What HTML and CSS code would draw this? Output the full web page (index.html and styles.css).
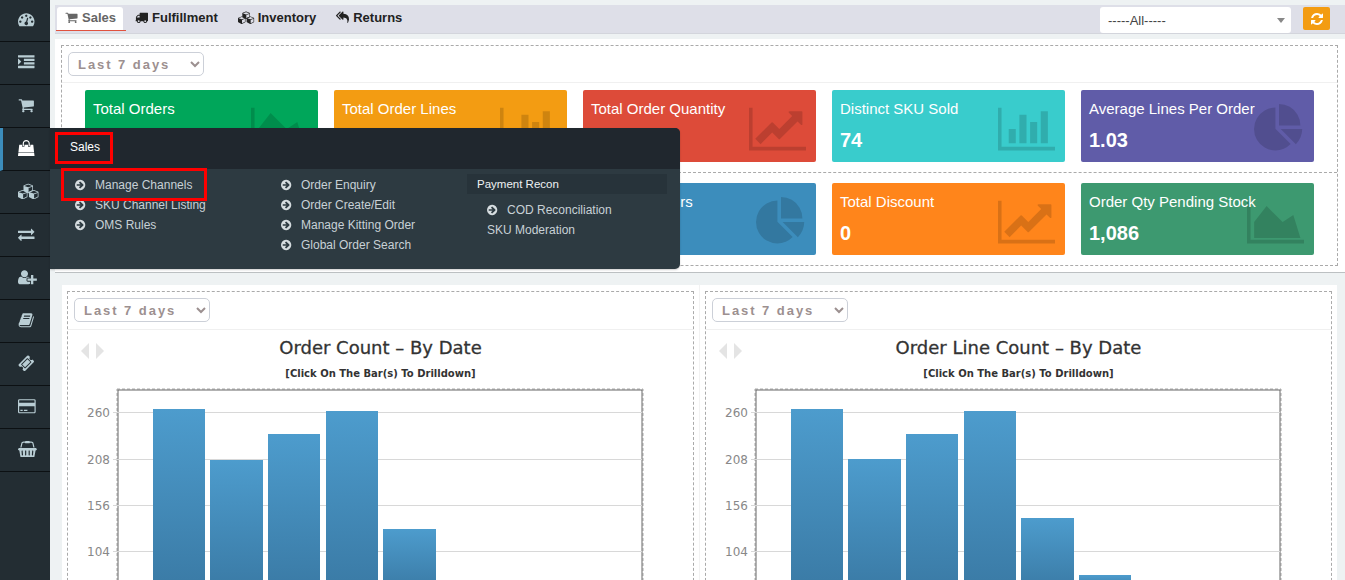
FILE: index.html
```html
<!DOCTYPE html>
<html lang="en">
<head>
<meta charset="utf-8">
<title>Sales Dashboard</title>
<link rel="stylesheet" href="styles.css">
</head>
<body>
<svg class="defs" aria-hidden="true">
  <defs>
    <linearGradient id="bar" x1="0" y1="0" x2="0" y2="1"><stop offset="0" stop-color="#4d9ccd"/><stop offset="1" stop-color="#3a7aa5"/></linearGradient>
    <path id="p-cube" d="M896 1629l640-349v-636l-640 233v752zm-64-865l698-254-698-254-698 254zm832-252v768q0 35-18 65t-49 47l-704 384q-28 16-61 16t-61-16l-704-384q-31-17-49-47t-18-65v-768q0-40 23-73t61-47l704-256q22-8 44-8t44 8l704 256q38 14 61 47t23 73z"/>
  </defs>
  <symbol id="i-dash" viewBox="0 0 1792 1792" preserveAspectRatio="xMinYMid meet"><path d="M384 1152q0-53-37.5-90.5t-90.5-37.5-90.5 37.5-37.5 90.5 37.5 90.5 90.5 37.5 90.5-37.5 37.5-90.5zm192-448q0-53-37.5-90.5t-90.5-37.5-90.5 37.5-37.5 90.5 37.5 90.5 90.5 37.5 90.5-37.5 37.5-90.5zm428 481l101-382q6-26-7.5-48.5t-38.5-29.5-48 6.5-30 39.5l-101 382q-60 5-107 43.5t-63 98.5q-20 77 20 146t117 89 146-20 89-117q16-60-6-117t-72-91zm660-33q0-53-37.5-90.5t-90.5-37.5-90.5 37.5-37.5 90.5 37.5 90.5 90.5 37.5 90.5-37.5 37.5-90.5zm-640-640q0-53-37.5-90.5t-90.5-37.5-90.5 37.5-37.5 90.5 37.5 90.5 90.5 37.5 90.5-37.5 37.5-90.5zm448 192q0-53-37.5-90.5t-90.5-37.5-90.5 37.5-37.5 90.5 37.5 90.5 90.5 37.5 90.5-37.5 37.5-90.5zm320 448q0 261-141 483-19 29-54 29h-1402q-35 0-54-29-141-221-141-483 0-182 71-348t191-286 286-191 348-71 348 71 286 191 191 286 71 348z"/></symbol>
  <symbol id="i-indent" viewBox="0 0 1792 1792" preserveAspectRatio="xMinYMid meet"><path d="M352 832q0 14-9 23l-288 288q-9 9-23 9-13 0-22.5-9.5t-9.5-22.5v-576q0-13 9.5-22.5t22.5-9.5q14 0 23 9l288 288q9 9 9 23zm1440 480v192q0 13-9.5 22.5t-22.5 9.5h-1728q-13 0-22.5-9.5t-9.5-22.5v-192q0-13 9.5-22.5t22.5-9.5h1728q13 0 22.5 9.5t9.5 22.5zm0-384v192q0 13-9.5 22.5t-22.5 9.5h-1088q-13 0-22.5-9.5t-9.5-22.5v-192q0-13 9.5-22.5t22.5-9.5h1088q13 0 22.5 9.5t9.5 22.5zm0-384v192q0 13-9.5 22.5t-22.5 9.5h-1088q-13 0-22.5-9.5t-9.5-22.5v-192q0-13 9.5-22.5t22.5-9.5h1088q13 0 22.5 9.5t9.5 22.5zm0-384v192q0 13-9.5 22.5t-22.5 9.5h-1728q-13 0-22.5-9.5t-9.5-22.5v-192q0-13 9.5-22.5t22.5-9.5h1728q13 0 22.5 9.5t9.5 22.5z"/></symbol>
  <symbol id="i-cart" viewBox="0 0 1792 1792" preserveAspectRatio="xMinYMid meet"><path d="M704 1536q0 52-38 90t-90 38-90-38-38-90 38-90 90-38 90 38 38 90zm896 0q0 52-38 90t-90 38-90-38-38-90 38-90 90-38 90 38 38 90zm128-1088v512q0 24-16.5 42.5t-40.5 21.5l-1044 122q13 60 13 70 0 16-24 64h920q26 0 45 19t19 45-19 45-45 19h-1024q-26 0-45-19t-19-45q0-11 8-31.5t16-36 21.5-40 15.5-29.5l-177-823h-204q-26 0-45-19t-19-45 19-45 45-19h256q16 0 28.5 6.5t19.5 15.5 13 24.5 8 26 5.5 29.5 4.5 26h1201q26 0 45 19t19 45z"/></symbol>
  <symbol id="i-bag" viewBox="0 0 1792 1792" preserveAspectRatio="xMinYMid meet"><path d="M1757 1408l35 313q3 28-16 50-19 21-48 21h-1664q-29 0-48-21-19-22-16-50l35-313h1722zm-93-839l86 775h-1708l86-775q3-24 21-40.5t43-16.5h256v128q0 53 37.5 90.5t90.5 37.5 90.5-37.5 37.5-90.5v-128h384v128q0 53 37.5 90.5t90.5 37.5 90.5-37.5 37.5-90.5v-128h256q25 0 43 16.5t21 40.5zm-384-185v256q0 26-19 45t-45 19-45-19-19-45v-256q0-106-75-181t-181-75-181 75-75 181v256q0 26-19 45t-45 19-45-19-19-45v-256q0-159 112.5-271.5t271.5-112.5 271.5 112.5 112.5 271.5z"/></symbol>
  <symbol id="i-cubes" viewBox="0 0 2304 1792" preserveAspectRatio="xMinYMid meet"><use href="#p-cube" transform="translate(596 0) scale(.62)"/><use href="#p-cube" transform="translate(0 680) scale(.62)"/><use href="#p-cube" transform="translate(1192 680) scale(.62)"/></symbol>
  <symbol id="i-exchange" viewBox="0 0 1792 1792" preserveAspectRatio="xMinYMid meet"><path d="M1792 1184v192q0 13-9.5 22.5t-22.5 9.5h-1376v192q0 13-9.5 22.5t-22.5 9.5q-12 0-24-10l-319-320q-9-9-9-22 0-14 9-23l320-320q9-9 23-9 13 0 22.5 9.5t9.5 22.5v192h1376q13 0 22.5 9.5t9.5 22.5zm0-544q0 14-9 23l-320 320q-9 9-23 9-13 0-22.5-9.5t-9.5-22.5v-192h-1376q-13 0-22.5-9.5t-9.5-22.5v-192q0-13 9.5-22.5t22.5-9.5h1376v-192q0-14 9-23t23-9q12 0 24 10l319 319q9 9 9 23z"/></symbol>
  <symbol id="i-userplus" viewBox="0 0 2048 1792" preserveAspectRatio="xMinYMid meet"><path d="M704 896q-159 0-271.5-112.5t-112.5-271.5 112.5-271.5 271.5-112.5 271.5 112.5 112.5 271.5-112.5 271.5-271.5 112.5zm960 128h352q13 0 22.5 9.5t9.5 22.5v192q0 13-9.5 22.5t-22.5 9.5h-352v352q0 13-9.5 22.5t-22.5 9.5h-192q-13 0-22.5-9.5t-9.5-22.5v-352h-352q-13 0-22.5-9.5t-9.5-22.5v-192q0-13 9.5-22.5t22.5-9.5h352v-352q0-13 9.5-22.5t22.5-9.5h192q13 0 22.5 9.5t9.5 22.5v352zm-736 224q0 52 38 90t90 38h256v238q-68 50-171 50h-874q-121 0-194-69t-73-190q0-53 3.5-103.5t14-109 26.5-108.5 43-97.5 62-81 85.5-53.5 111.5-20q19 0 39 17 79 61 154.5 91.5t164.5 30.5 164.5-30.5 154.5-91.5q20-17 39-17 132 0 217 96h-223q-52 0-90 38t-38 90v192z"/></symbol>
  <symbol id="i-book" viewBox="0 0 1792 1792" preserveAspectRatio="xMinYMid meet"><path d="M1703 478q40 57 18 129l-275 906q-19 64-76.5 107.5t-122.5 43.5h-923q-77 0-148.5-53.5t-99.5-131.5q-24-67-2-127 0-4 3-27t4-37q1-8-3-21.5t-3-19.5q2-11 8-21t16.5-23.5 16.5-23.5q23-38 45-91.5t30-91.5q3-10 .5-30t-.5-28q3-11 17-28t17-23q21-36 42-92t25-90q1-9-2.5-32t.5-28q4-13 22-30.5t22-22.5q19-26 42.5-84.5t27.5-96.5q1-8-3-25.5t-2-26.5q2-8 9-18t18-23 17-21q8-12 16.5-30.5t15-35 16-36 19.5-32 26.5-23.5 36-11.5 47.5 5.5l-1 3q38-9 51-9h761q74 0 114 56t18 130l-274 906q-36 119-71.5 153.5t-128.5 34.5h-869q-27 0-38 15-11 16-1 43 24 70 144 70h923q29 0 56-15.5t35-41.5l300-987q7-22 5-57 38 15 59 43zm-1064 2q-4 13 2 22.5t20 9.5h608q13 0 25.5-9.5t16.5-22.5l21-64q4-13-2-22.5t-20-9.5h-608q-13 0-25.5 9.5t-16.5 22.5zm-83 256q-4 13 2 22.5t20 9.5h608q13 0 25.5-9.5t16.5-22.5l21-64q4-13-2-22.5t-20-9.5h-608q-13 0-25.5 9.5t-16.5 22.5z"/></symbol>
  <symbol id="i-ticket" viewBox="0 0 1792 1792" preserveAspectRatio="xMinYMid meet"><path d="M1024 452l316 316-572 572-316-316zm-211 979l618-618q19-19 19-45t-19-45l-362-362q-18-18-45-18t-45 18l-618 618q-19 19-19 45t19 45l362 362q18 18 45 18t45-18zm889-637l-907 908q-37 37-90.5 37t-90.5-37l-126-126q56-56 56-136t-56-136-136-56-136 56l-125-126q-37-37-37-90.5t37-90.5l907-906q37-37 90.5-37t90.5 37l125 125q-56 56-56 136t56 136 136 56 136-56l126 125q37 37 37 90.5t-37 90.5z"/></symbol>
  <symbol id="i-card" viewBox="0 0 1920 1792" preserveAspectRatio="xMinYMid meet"><path d="M1760 128q66 0 113 47t47 113v1216q0 66-47 113t-113 47h-1600q-66 0-113-47t-47-113v-1216q0-66 47-113t113-47h1600zm-1600 128q-13 0-22.5 9.5t-9.5 22.5v224h1664v-224q0-13-9.5-22.5t-22.5-9.5h-1600zm1600 1280q13 0 22.5-9.5t9.5-22.5v-608h-1664v608q0 13 9.5 22.5t22.5 9.5h1600zm-1504-128v-128h256v128h-256zm384 0v-128h384v128h-384z"/></symbol>
  <symbol id="i-basket" viewBox="0 0 2048 1792" preserveAspectRatio="xMinYMid meet"><path d="M1920 768q53 0 90.5 37.5t37.5 90.5-37.5 90.5-90.5 37.5h-15l-115 662q-8 46-44 76t-82 30h-1280q-46 0-82-30t-44-76l-115-662h-15q-53 0-90.5-37.5t-37.5-90.5 37.5-90.5 90.5-37.5h1792zm-1435 800q26-2 43.5-22.5t15.5-46.5l-32-416q-2-26-22.5-43.5t-46.5-15.5-43.5 22.5-15.5 46.5l32 416q2 25 20.5 42t43.5 17h5zm411-64v-416q0-26-19-45t-45-19-45 19-19 45v416q0 26 19 45t45 19 45-19 19-45zm384 0v-416q0-26-19-45t-45-19-45 19-19 45v416q0 26 19 45t45 19 45-19 19-45zm352 5l32-416q2-26-15.5-46.5t-43.5-22.5-46.5 15.5-22.5 43.5l-32 416q-2 26 15.5 46.5t43.5 22.5h5q25 0 43.5-17t20.5-42zm-1156-1217l-93 412h-132l101-441q19-88 89-143.5t160-55.5h167q0-26 19-45t45-19h384q26 0 45 19t19 45h167q90 0 160 55.5t89 143.5l101 441h-132l-93-412q-11-44-45.5-72t-79.5-28h-167q0 26-19 45t-45 19h-384q-26 0-45-19t-19-45h-167q-45 0-79.5 28t-45.5 72z"/></symbol>
  <symbol id="i-truck" viewBox="0 0 1792 1792" preserveAspectRatio="xMinYMid meet"><path d="M640 1408q0-52-38-90t-90-38-90 38-38 90 38 90 90 38 90-38 38-90zm-384-512h384v-256h-158q-13 0-22 9l-195 195q-9 9-9 22v30zm1280 512q0-52-38-90t-90-38-90 38-38 90 38 90 90 38 90-38 38-90zm256-1088v1024q0 15-4 26.5t-13.5 18.5-16.5 11.5-23.5 6-22.5 2-25.5 0-22.5-.5q0 106-75 181t-181 75-181-75-75-181h-384q0 106-75 181t-181 75-181-75-75-181h-64q-3 0-22.5.5t-25.5 0-22.5-2-23.5-6-16.5-11.5-13.5-18.5-4-26.5q0-26 19-45t45-19v-320q0-8-.5-35t0-38 2.5-34.5 6.5-37 14-30.5 22.5-30l198-198q19-19 50.5-32t58.5-13h160v-192q0-26 19-45t45-19h1024q26 0 45 19t19 45z"/></symbol>
  <symbol id="i-reply" viewBox="0 0 1792 1792" preserveAspectRatio="xMinYMid meet"><path d="M640 1082v70q0 42-39 59-13 5-25 5-27 0-45-19l-512-512q-19-19-19-45t19-45l512-512q29-31 70-14 39 17 39 59v69l-397 398q-19 19-19 45t19 45zm1152 38q0 58-17 133.5t-38.5 138-48 125-40.5 90.5l-20 40q-8 17-28 17-6 0-9-1-25-8-23-34 43-400-106-565-64-71-170.5-110.5t-267.5-52.5v251q0 42-39 59-13 5-25 5-27 0-45-19l-512-512q-19-19-19-45t19-45l512-512q29-31 70-14 39 17 39 59v262q411 28 599 221 169 173 169 509z"/></symbol>
  <symbol id="i-refresh" viewBox="0 0 1792 1792"><path d="M1639 1056q0 5-1 7-64 268-268 434.5t-478 166.5q-146 0-282.5-55t-243.5-157l-129 129q-19 19-45 19t-45-19-19-45v-448q0-26 19-45t45-19h448q26 0 45 19t19 45-19 45l-137 137q71 66 161 102t187 36q134 0 250-65t186-179q11-17 53-117 8-23 30-23h192q13 0 22.5 9.5t9.5 22.5zm25-800v448q0 26-19 45t-45 19h-448q-26 0-45-19t-19-45 19-45l138-138q-148-137-349-137-134 0-250 65t-186 179q-11 17-53 117-8 23-30 23h-199q-13 0-22.5-9.5t-9.5-22.5v-7q65-268 270-434.5t480-166.5q146 0 284 55.5t245 156.5l130-129q19-19 45-19t45 19 19 45z"/></symbol>
  <symbol id="i-go" viewBox="0 0 1792 1792"><path d="M1285 896q0-27-18-45l-91-91-362-362q-18-18-45-18t-45 18l-91 91q-18 18-18 45t18 45l189 189h-502q-26 0-45 19t-19 45v128q0 26 19 45t45 19h502l-189 189q-19 19-19 45t19 45l91 91q18 18 45 18t45-18l362-362 91-91q18-18 18-45zm251 0q0 209-103 385.5t-279.5 279.5-385.5 103-385.5-103-279.5-279.5-103-385.5 103-385.5 279.5-279.5 385.5-103 385.5 103 279.5 279.5 103 385.5z"/></symbol>
  <symbol id="i-area" viewBox="0 0 2048 1792"><path d="M2048 1536v128H0V128h128v1408h1920zM1664 640l256 832H256V896l448-576 576 576 384-256z"/></symbol>
  <symbol id="i-line" viewBox="0 0 2048 1792"><path d="M2048 1536v128h-2048v-1536h128v1408h1920zm-128-1248v435q0 21-19.5 29.5t-35.5-7.5l-121-121-633 633q-10 10-23 10t-23-10l-233-233-416 416-192-192 585-585q10-10 23-10t23 10l233 233 464-464-121-121q-16-16-7.5-35.5t29.5-19.5h435q14 0 23 9t9 23z"/></symbol>
  <symbol id="i-bars" viewBox="0 0 2048 1792"><path d="M640 896v512h-256v-512h256zm384-512v1024h-256v-1024h256zm1024 1152v128h-2048v-1536h128v1408h1920zm-640-896v768h-256v-768h256zm384-384v1152h-256v-1152h256z"/></symbol>
  <symbol id="i-pie" viewBox="0 0 1792 1792"><path d="M768 890l546 546q-106 108-247.5 168t-298.5 60q-209 0-385.5-103t-279.5-279.5-103-385.5 103-385.5 279.5-279.5 385.5-103v762zm187 6h773q0 157-60 298.5t-168 247.5zm709-128h-768v-768q209 0 385.5 103t279.5 279.5 103 385.5z"/></symbol>
</svg>

<div class="app">
  <nav class="side">
    <a class="side-item"><svg class="side-icon"><use href="#i-dash"/></svg></a>
    <a class="side-item"><svg class="side-icon"><use href="#i-indent"/></svg></a>
    <a class="side-item"><svg class="side-icon"><use href="#i-cart"/></svg></a>
    <a class="side-item active"><svg class="side-icon"><use href="#i-bag"/></svg></a>
    <a class="side-item"><svg class="side-icon"><use href="#i-cubes"/></svg></a>
    <a class="side-item"><svg class="side-icon"><use href="#i-exchange"/></svg></a>
    <a class="side-item"><svg class="side-icon"><use href="#i-userplus"/></svg></a>
    <a class="side-item"><svg class="side-icon"><use href="#i-book"/></svg></a>
    <a class="side-item"><svg class="side-icon"><use href="#i-ticket"/></svg></a>
    <a class="side-item"><svg class="side-icon"><use href="#i-card"/></svg></a>
    <a class="side-item"><svg class="side-icon"><use href="#i-basket"/></svg></a>
  </nav>

  <main class="main">
    <header class="topbar">
      <a class="tab current"><svg class="tab-icon"><use href="#i-cart"/></svg>Sales</a>
      <a class="tab"><svg class="tab-icon"><use href="#i-truck"/></svg>Fulfillment</a>
      <a class="tab"><svg class="tab-icon wide"><use href="#i-cubes"/></svg>Inventory</a>
      <a class="tab"><svg class="tab-icon"><use href="#i-reply"/></svg>Returns</a>
      <div class="combo">-----All-----<span class="caret"></span></div>
      <button class="refresh" type="button"><svg class="refresh-icon"><use href="#i-refresh"/></svg></button>
    </header>

    <section class="panel">
      <div class="dash-box">
        <div class="kpi-head"><select class="range"><option>Last 7 days</option></select></div>
        <div class="kpi-row first">
          <div class="kpi green"><div class="kpi-title">Total Orders</div><svg class="kpi-icon wide"><use href="#i-area"/></svg></div>
          <div class="kpi amber"><div class="kpi-title">Total Order Lines</div><svg class="kpi-icon wide"><use href="#i-bars"/></svg></div>
          <div class="kpi red"><div class="kpi-title">Total Order Quantity</div><svg class="kpi-icon wide"><use href="#i-line"/></svg></div>
          <div class="kpi teal"><div class="kpi-title">Distinct SKU Sold</div><div class="kpi-value">74</div><svg class="kpi-icon wide"><use href="#i-bars"/></svg></div>
          <div class="kpi purple"><div class="kpi-title">Average Lines Per Order</div><div class="kpi-value">1.03</div><svg class="kpi-icon"><use href="#i-pie"/></svg></div>
        </div>
        <div class="kpi-row">
          <div class="kpi green"></div>
          <div class="kpi amber"></div>
          <div class="kpi blue"><div class="kpi-title">Fulfilled Orders</div><svg class="kpi-icon"><use href="#i-pie"/></svg></div>
          <div class="kpi orange"><div class="kpi-title">Total Discount</div><div class="kpi-value">0</div><svg class="kpi-icon wide"><use href="#i-line"/></svg></div>
          <div class="kpi sea"><div class="kpi-title">Order Qty Pending Stock</div><div class="kpi-value">1,086</div><svg class="kpi-icon wide"><use href="#i-area"/></svg></div>
        </div>
      </div>
    </section>

    <section class="charts">
      <article class="chart-panel">
        <div class="chart-box">
          <div class="chart-tools"><select class="range"><option>Last 7 days</option></select></div>
          <div class="chart-body">
            <div class="pager"><span class="tri left"></span><span class="tri right"></span></div>
            <h2 class="chart-title">Order Count – By Date</h2>
            <p class="chart-sub">[Click On The Bar(s) To Drilldown]</p>
            <svg class="plot" viewBox="0 0 626 210">
              <rect class="frame-out" x="49" y="5" width="526" height="220"/>
              <rect class="frame-in" x="50" y="6" width="524" height="220"/>
              <path class="grid" d="M45 28.5H574M45 75.5H574M45 121.5H574M45 167.5H574"/>
              <text class="tick" x="42" y="33">260</text><text class="tick" x="42" y="80">208</text><text class="tick" x="42" y="126">156</text><text class="tick" x="42" y="172">104</text>
              <rect class="col" x="85" y="25" width="52" height="181"/>
              <rect class="col" x="142" y="76" width="53" height="130"/>
              <rect class="col" x="200" y="50" width="52" height="156"/>
              <rect class="col" x="258" y="27" width="52" height="179"/>
              <rect class="col" x="315" y="145" width="53" height="61"/>
            </svg>
          </div>
        </div>
      </article>
      <article class="chart-panel">
        <div class="chart-box">
          <div class="chart-tools"><select class="range"><option>Last 7 days</option></select></div>
          <div class="chart-body">
            <div class="pager"><span class="tri left"></span><span class="tri right"></span></div>
            <h2 class="chart-title">Order Line Count – By Date</h2>
            <p class="chart-sub">[Click On The Bar(s) To Drilldown]</p>
            <svg class="plot" viewBox="0 0 626 210">
              <rect class="frame-out" x="49" y="5" width="526" height="220"/>
              <rect class="frame-in" x="50" y="6" width="524" height="220"/>
              <path class="grid" d="M45 28.5H574M45 75.5H574M45 121.5H574M45 167.5H574"/>
              <text class="tick" x="42" y="33">260</text><text class="tick" x="42" y="80">208</text><text class="tick" x="42" y="126">156</text><text class="tick" x="42" y="172">104</text>
              <rect class="col" x="85" y="25" width="52" height="181"/>
              <rect class="col" x="142" y="75" width="53" height="131"/>
              <rect class="col" x="200" y="50" width="52" height="156"/>
              <rect class="col" x="258" y="27" width="52" height="179"/>
              <rect class="col" x="315" y="134" width="53" height="72"/>
              <rect class="col" x="373" y="191" width="52" height="15"/>
            </svg>
          </div>
        </div>
      </article>
    </section>
  </main>

  <div class="flyout">
    <div class="fly-head">Sales</div>
    <div class="fly-body">
      <ul class="fly-col">
        <li class="fly-link"><svg class="go"><use href="#i-go"/></svg>Manage Channels</li>
        <li class="fly-link"><svg class="go"><use href="#i-go"/></svg>SKU Channel Listing</li>
        <li class="fly-link"><svg class="go"><use href="#i-go"/></svg>OMS Rules</li>
      </ul>
      <ul class="fly-col">
        <li class="fly-link"><svg class="go"><use href="#i-go"/></svg>Order Enquiry</li>
        <li class="fly-link"><svg class="go"><use href="#i-go"/></svg>Order Create/Edit</li>
        <li class="fly-link"><svg class="go"><use href="#i-go"/></svg>Manage Kitting Order</li>
        <li class="fly-link"><svg class="go"><use href="#i-go"/></svg>Global Order Search</li>
      </ul>
      <ul class="fly-col recon">
        <li class="fly-group">Payment Recon</li>
        <li class="fly-link"><svg class="go"><use href="#i-go"/></svg>COD Reconciliation</li>
        <li class="fly-link">SKU Moderation</li>
      </ul>
    </div>
    <span class="mark mark-head"></span>
    <span class="mark mark-item"></span>
  </div>
</div>
</body>
</html>
```
FILE: styles.css
```css
* { box-sizing: border-box; }
html, body { margin: 0; height: 580px; overflow: hidden; }
body { background: #eef2f3; font-family: "Liberation Sans", Arial, sans-serif; color: #333; }
.defs { position: absolute; width: 0; height: 0; }
symbol path { fill-rule: evenodd; }
#p-cube { fill-rule: evenodd; }

.app { position: relative; display: flex; height: 580px; overflow: hidden; }

.side { flex: 0 0 50px; background: #232d33; margin-top: -1px; height: 581px; }
.side-item { display: flex; align-items: center; height: 43px; padding: 0 0 2px 18px; border-bottom: 1px solid #0c1013; }
.side-item.active { padding-left: 15px; border-left: 3px solid #3c8dbc; }
.side-icon { width: 22px; height: 16.5px; fill: #b9cdd4; display: block; }
.active .side-icon { fill: #fff; }

.main { flex: 1; min-width: 0; padding: 5px 0 0 5px; }

.topbar { display: flex; align-items: flex-start; height: 29px; background: #dedfe8; border-bottom: 1px solid #d3d5dc; padding-left: 2px; }
.tab { position: relative; display: flex; align-items: center; height: 23px; margin-top: 2px; padding: 0 11px 3px 9px; font-size: 13px; font-weight: bold; color: #222; border-radius: 3px 3px 0 0; }
.tab.current { background: #fff; color: #666; margin-right: 3px; width: 66px; padding-left: 8px; }
.tab.current::after { content: ""; position: absolute; left: -1px; right: -3px; top: 100%; height: 1px; background: #e0533f; }
.tab-icon { width: 14px; height: 13px; fill: currentColor; margin-right: 3px; flex: none; }
.tab-icon.wide { width: 17px; }
.combo { position: relative; width: 191px; height: 26px; margin: 2px 0 0 auto; padding-left: 8px; background: #fff; border-radius: 3px; font-size: 13px; line-height: 27px; color: #444; }
.caret { position: absolute; right: 6px; top: 11px; border: 4px solid transparent; border-top: 5px solid #888; border-bottom: 0; }
.refresh { width: 27px; height: 23px; margin: 2px 15px 0 12px; padding: 0; background: #f39c12; border: 0; border-radius: 2px; display: flex; align-items: center; justify-content: center; }
.refresh-icon { width: 14px; height: 14px; fill: #fff; }

.panel { margin-top: 5px; padding: 6px 7px 6px 6px; background: #fff; border-bottom: 1px solid #bcc0c2; }
.dash-box { border: 1px dashed #aaa; }
.kpi-head { padding: 6px; height: 37px; border-bottom: 1px solid #f0f0f0; }
.range { display: block; width: 136px; height: 24px; padding: 0 0 0 5px; background: #fff; border: 1px solid #ccd0d8; border-radius: 5px; font: bold 13px "Liberation Sans", Arial, sans-serif; letter-spacing: 1.95px; color: #9c9090; }
.kpi-row { display: flex; gap: 16px; padding: 10px 0 10px 23px; }
.kpi-row.first { padding-top: 7px; border-bottom: 1px dashed #aaa; }
.kpi { position: relative; flex: 0 0 233px; height: 72px; padding: 10px 8px; border-radius: 2px; color: #fff; overflow: hidden; }
.kpi-title { font-size: 15px; line-height: 18px; position: relative; z-index: 1; }
.kpi-value { font-size: 20px; font-weight: bold; line-height: 24px; margin-top: 10px; position: relative; z-index: 1; }
.kpi-icon { position: absolute; right: 10px; top: 14px; width: 50px; height: 50px; fill: rgba(0, 0, 0, .15); }
.kpi-icon.wide { width: 57px; }
.green { background: #00a65a; }
.amber { background: #f39c12; }
.red { background: #dd4b39; }
.teal { background: #39cccc; }
.purple { background: #605ca8; }
.blue { background: #3c8dbc; }
.orange { background: #ff851b; }
.sea { background: #3d9970; }

.charts { display: grid; grid-template-columns: 638px 637px; margin: 12px 0 0 7px; }
.chart-panel { background: #fff; padding: 6px 5px 0; height: 300px; }
.chart-panel:first-child { padding-right: 5px; border-right: 1px solid #f2f2f2; }
.chart-box { border: 1px dashed #aaa; border-bottom: 0; height: 300px; }
.chart-tools { padding: 6px; height: 38px; border-bottom: 1px solid #f0f0f0; }
.chart-body { position: relative; padding-top: 6px; }
.chart-title { margin: 0; text-align: center; font: normal 18px/24px "DejaVu Sans", Verdana, sans-serif; color: #333; -webkit-text-stroke: .3px #333; }
.chart-sub { margin: 7px 0 3px; text-align: center; font: bold 10px/14px "DejaVu Sans", Verdana, sans-serif; color: #333; }
.plot { display: block; width: 626px; height: 210px; overflow: visible; }
.frame-out { fill: none; stroke: #aaa; stroke-dasharray: 3 2; }
.frame-in { fill: #fff; stroke: #666; }
.grid { fill: none; stroke: #d8d8d8; stroke-width: 1; }
.tick { font: 12px "DejaVu Sans", Verdana, sans-serif; fill: #888; text-anchor: end; }
.col { fill: url(#bar); }

.pager { position: absolute; left: 13px; top: 13px; display: flex; gap: 7px; }
.tri { width: 0; height: 0; border-top: 8px solid transparent; border-bottom: 8px solid transparent; }
.tri.left { border-right: 8px solid #e4e4e4; }
.tri.right { border-left: 8px solid #e4e4e4; }

.flyout { position: absolute; z-index: 10; left: 50px; top: 128px; width: 630px; height: 141px; background: #2d3a41; border-radius: 0 5px 5px 0; box-shadow: 0 1px 2px rgba(0,0,0,.2); }
.fly-head { height: 41px; padding-left: 20px; background: #20272e; border-radius: 0 5px 0 0; color: #fff; font-size: 12px; line-height: 39px; }
.fly-body { display: grid; grid-template-columns: 206px 186px 200px; padding: 6px 0 0 25px; }
.fly-col { list-style: none; margin: 0; padding: 0; }
.fly-link { display: flex; align-items: center; height: 20px; font-size: 12px; color: #c8d1d6; }
.go { width: 12px; height: 12px; margin-right: 8px; fill: #d6dde0; flex: none; }
.recon { margin-top: -1px; }
.recon .fly-link { padding-left: 20px; }
.fly-group { height: 20px; margin-bottom: 6px; padding-left: 10px; background: #27333a; color: #eef1f3; font-size: 11.5px; line-height: 20px; }
.mark { position: absolute; border: 3px solid #f00; }
.mark-head { left: 5px; top: 4px; width: 58px; height: 32px; }
.mark-item { left: 11px; top: 40px; width: 146px; height: 33px; }
```
